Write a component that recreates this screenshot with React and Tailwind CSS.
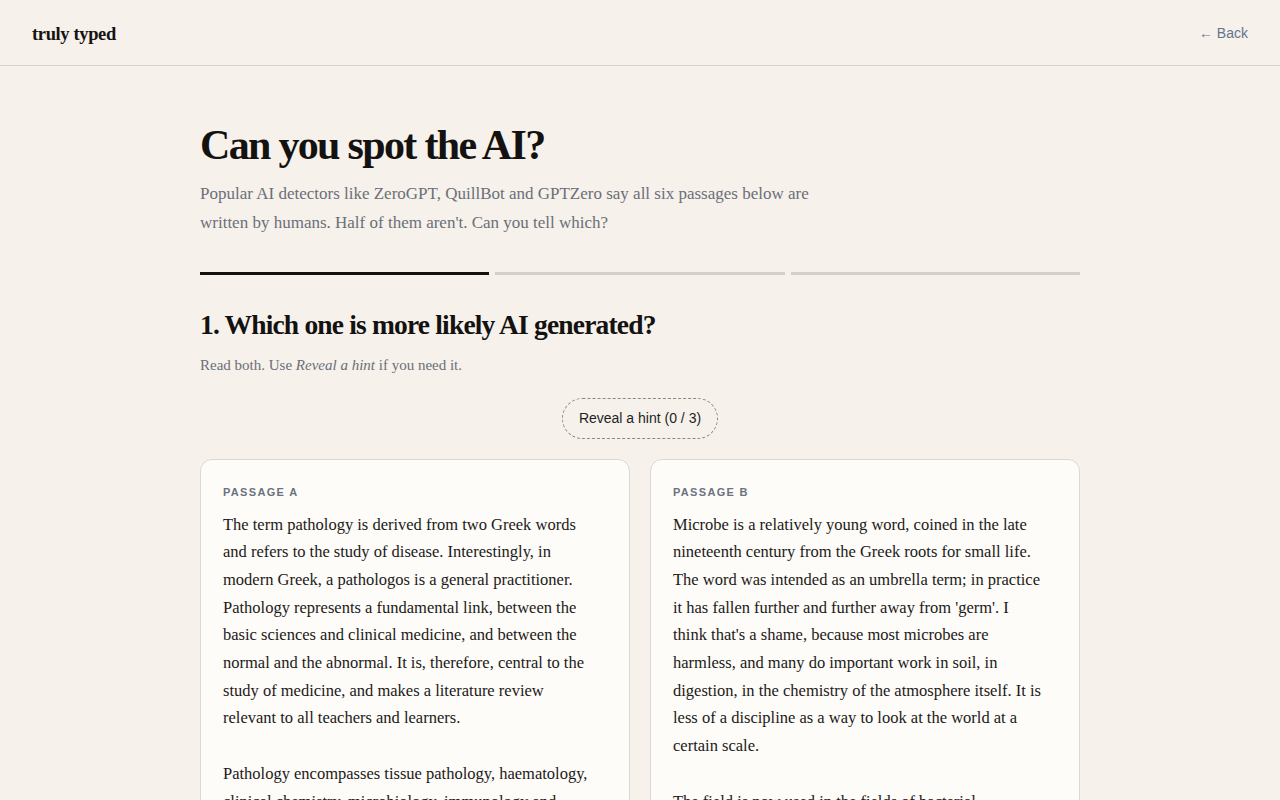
import { useState } from 'react';

const serif = { fontFamily: '"Liberation Serif", "DejaVu Serif", serif' };

// Line breaks follow the typeset passages, so each line is kept on its own.
const passages = [
  {
    label: 'Passage A',
    paragraphs: [
      [
        'The term pathology is derived from two Greek words',
        'and refers to the study of disease. Interestingly, in',
        'modern Greek, a pathologos is a general practitioner.',
        'Pathology represents a fundamental link, between the',
        'basic sciences and clinical medicine, and between the',
        'normal and the abnormal. It is, therefore, central to the',
        'study of medicine, and makes a literature review',
        'relevant to all teachers and learners.',
      ],
      [
        'Pathology encompasses tissue pathology, haematology,',
        'clinical chemistry, microbiology, immunology and',
        'genetics, and each of these has grown into a specialty.',
      ],
    ],
  },
  {
    label: 'Passage B',
    paragraphs: [
      [
        'Microbe is a relatively young word, coined in the late',
        'nineteenth century from the Greek roots for small life.',
        'The word was intended as an umbrella term; in practice',
        "it has fallen further and further away from 'germ'. I",
        "think that's a shame, because most microbes are",
        'harmless, and many do important work in soil, in',
        'digestion, in the chemistry of the atmosphere itself. It is',
        'less of a discipline as a way to look at the world at a',
        'certain scale.',
      ],
      [
        'The field is now used in the fields of bacterial',
        'genetics, virology and ecology, and most of its',
        'practitioners would not call themselves microbiologists.',
      ],
    ],
  },
];

function PassageCard({ passage }) {
  return (
    <article className="bg-[#fdfcf9] border border-[#ddd7d0] rounded-xl px-[22px] pt-[24px] pb-8">
      <div className="text-[11px] font-bold uppercase tracking-[0.12em] text-[#6b7280] font-['Liberation_Sans',Arial,sans-serif]">
        {passage.label}
      </div>
      <div className="mt-[10px] text-[16.5px] leading-[27.7px] text-[#1c1917]" style={serif}>
        {passage.paragraphs.map((lines, i) => (
          <p key={i} className={i > 0 ? 'mt-[27.7px]' : ''}>
            {lines.map((line, j) => (
              <span key={j} className="block whitespace-nowrap">
                {line}
              </span>
            ))}
          </p>
        ))}
      </div>
    </article>
  );
}

export default function App() {
  const [hints, setHints] = useState(0);

  return (
    <div className="min-h-screen bg-[#f6f1eb] text-[#161412]">
      <header className="h-[66px] border-b border-[#d8d2cb] flex items-center justify-between px-8 pt-1">
        <div className="text-[18.5px] font-bold tracking-[-0.02em] text-[#161412]" style={serif}>
          truly typed
        </div>
        <a href="#" className="text-[14px] text-[#64748b] font-['Liberation_Sans',Arial,sans-serif] -mt-[2px]">
          ← Back
        </a>
      </header>

      <main className="max-w-[880px] mx-auto pt-[54px]">
        <h1 className="text-[42px] leading-[50px] font-bold tracking-[-0.04em] text-[#141210]" style={serif}>
          Can you spot the AI?
        </h1>
        <p className="mt-[9px] max-w-[630px] text-[17px] leading-[29px] text-[#6b6f78]" style={serif}>
          Popular AI detectors like ZeroGPT, QuillBot and GPTZero say all six passages below are
          written by humans. Half of them aren't. Can you tell which?
        </p>

        <div className="mt-[35px] flex gap-[6px]">
          <div className="flex-1 h-[3px] bg-[#141210]" />
          <div className="flex-1 h-[3px] bg-[#d6cfc8]" />
          <div className="flex-1 h-[3px] bg-[#d6cfc8]" />
        </div>

        <h2 className="mt-[33px] text-[27.5px] leading-[34px] font-bold tracking-[-0.03em] text-[#141210]" style={serif}>
          1. Which one is more likely AI generated?
        </h2>
        <p className="mt-[12px] text-[15px] leading-[22px] text-[#6b6f78]" style={serif}>
          Read both. Use <em>Reveal a hint</em> if you need it.
        </p>

        <div className="mt-[22px] flex justify-center">
          <button
            onClick={() => setHints((h) => Math.min(3, h + 1))}
            className="h-[41px] px-[16px] rounded-full border border-dashed border-[#8d8882] text-[14px] text-[#1f1f1f] font-['Liberation_Sans',Arial,sans-serif]"
          >
            Reveal a hint ({hints} / 3)
          </button>
        </div>

        <div className="mt-[20px] grid grid-cols-2 gap-5">
          {passages.map((p) => (
            <PassageCard key={p.label} passage={p} />
          ))}
        </div>
      </main>
    </div>
  );
}
